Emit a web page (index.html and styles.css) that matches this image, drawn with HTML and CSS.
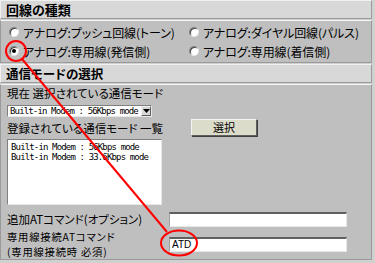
FILE: index.html
```html
<!DOCTYPE html>
<html lang="ja">
<head>
  <meta charset="UTF-8">
  <title>回線設定</title>
  <link rel="stylesheet" href="styles.css">
</head>
<body>
  <div class="panel">
    <div class="sec-head">回線の種類</div>
    <div class="sec-body radios">
      <label class="opt"><span class="radio"></span>アナログ:プッシュ回線(トーン)</label>
      <label class="opt"><span class="radio"></span>アナログ:ダイヤル回線(パルス)</label>
      <label class="opt"><span class="radio on"></span>アナログ:専用線(発信側)</label>
      <label class="opt"><span class="radio"></span>アナログ:専用線(着信側)</label>
    </div>

    <div class="sec-head second">通信モードの選択</div>
    <div class="sec-body modes">
      <div class="label">現在 選択されている通信モード</div>
      <div class="combo">
        <span class="combo-text">Built-in Modem : 56Kbps mode</span>
        <span class="combo-btn"><svg width="7" height="4" viewBox="0 0 7 4"><path d="M0 0h7L3.5 4z" fill="#000"/></svg></span>
      </div>
      <div class="list-row">
        <div class="label">登録されている通信モード 一覧</div>
        <button class="btn">選択</button>
      </div>
      <div class="listbox">
        <div>Built-in Modem : 56Kbps mode</div>
        <div>Built-in Modem : 33.6Kbps mode</div>
      </div>
      <div class="field first">
        <div class="label">追加ATコマンド(オプション)</div>
        <input class="text" type="text" value="">
      </div>
      <div class="field">
        <div class="label two">
          <div>専用線接続ATコマンド</div>
          <div>(専用線接続時 必須)</div>
        </div>
        <input class="text" type="text" value="ATD">
      </div>
    </div>
  </div>

  <!-- red annotation drawn over the dialog -->
  <svg class="marks" width="375" height="263" viewBox="0 0 375 263">
    <circle cx="16" cy="51" r="10" fill="none" stroke="#f00" stroke-width="2"/>
    <line x1="22" y1="59" x2="167" y2="232" stroke="#f00" stroke-width="2"/>
    <ellipse cx="179" cy="243" rx="18" ry="12.5" fill="none" stroke="#f00" stroke-width="2"/>
  </svg>
</body>
</html>
```

FILE: styles.css
```css
* {
  box-sizing: border-box;
}

body {
  margin: 0;
  background-color: #d0d0d0;
  font-family: "Noto Sans CJK JP", sans-serif;
  font-size: 11.5px;
  font-feature-settings: "palt";
  color: #000;
  position: relative;
  width: 375px;
  height: 263px;
  overflow: hidden;
}

.panel {
  width: 372px;
}

.sec-head {
  height: 19px;
  line-height: 17px;
  padding-left: 5px;
  background-color: #d8d8d8;
  border: 1px solid #9a9a9a;
  border-top-color: #f0f0f0;
  border-left-color: #f0f0f0;
  font-size: 13px;
  font-weight: bold;
}

.sec-head.second {
  margin-top: 1px;
  font-size: 12.5px;
}

.sec-body {
  background-color: #bfbfbf;
  border: 1px solid #9a9a9a;
  border-top-color: #f4f4f4;
  margin-top: 1px;
}

.radios {
  display: grid;
  grid-template-columns: 180px 1fr;
  row-gap: 3px;
  padding: 0 0 0 8px;
  height: 43px;
  align-content: center;
}

.opt {
  display: flex;
  align-items: center;
  gap: 4px;
  height: 16px;
  white-space: nowrap;
  font-size: 12px;
  letter-spacing: -0.1px;
}

.radio {
  width: 10px;
  height: 10px;
  border-radius: 50%;
  background: #fff;
  border: 1px solid #808080;
  border-right-color: #e8e8e8;
  border-bottom-color: #e8e8e8;
  box-shadow: inset 1px 1px 0 #404040;
  position: relative;
  flex: none;
}

.radio.on::after {
  content: "";
  position: absolute;
  left: 2px;
  top: 2px;
  width: 4px;
  height: 4px;
  border-radius: 50%;
  background: #000;
}

.modes {
  padding: 2px 0 0 6px;
  height: 176px;
}

.label {
  line-height: 13px;
  white-space: nowrap;
}

.combo {
  display: flex;
  align-items: center;
  width: 145px;
  height: 12px;
  margin-top: 5px;
  background: #fff;
  border: 1px solid #808080;
  border-right-color: #e8e8e8;
  border-bottom-color: #e8e8e8;
  padding-left: 2px;
  overflow: hidden;
}

.combo-text,
.listbox {
  font-family: "DejaVu Sans Mono", monospace;
  font-size: 9px;
  letter-spacing: -0.85px;
  white-space: nowrap;
}

.combo-text {
  flex: 1;
  line-height: 10px;
  overflow: hidden;
}

.combo-btn {
  flex: none;
  width: 10px;
  height: 10px;
  background: #d8d8d8;
  border: 1px solid #f0f0f0;
  border-right-color: #606060;
  border-bottom-color: #606060;
  display: flex;
  align-items: center;
  justify-content: center;
}

.list-row {
  display: flex;
  align-items: flex-start;
  margin-top: 2px;
  height: 17px;
}

.list-row .label {
  margin-top: 3px;
}

.btn {
  margin-left: 28px;
  width: 66px;
  height: 17px;
  padding: 0;
  font-family: "Noto Sans CJK JP", sans-serif;
  font-size: 11px;
  line-height: 13px;
  background-color: #dcdccb;
  border: 1px solid #f4f4f4;
  border-right-color: #606060;
  border-bottom-color: #606060;
  box-shadow: 1px 1px 0 #404040;
}

.listbox {
  width: 155px;
  height: 66px;
  margin-top: 3px;
  background: #fff;
  border: 1px solid #808080;
  border-right-color: #e8e8e8;
  border-bottom-color: #e8e8e8;
  padding: 2px 0 0 3px;
  line-height: 10px;
}

.field {
  display: flex;
  align-items: center;
  justify-content: space-between;
  width: 340px;
}

.field.first {
  margin-top: 7px;
  height: 15px;
}

.field + .field {
  margin-top: 2px;
  height: 30px;
}

.label.two {
  line-height: 15px;
  font-size: 10.3px;
  letter-spacing: 0.8px;
}

.text {
  width: 178px;
  height: 15px;
  padding: 0 2px;
  margin: 0;
  font-family: "Liberation Sans", sans-serif;
  font-size: 10px;
  letter-spacing: 0;
  background: #fff;
  border: 1px solid #e8e8e8;
  border-top: 2px solid #606060;
  border-left: 1px solid #a0a0a0;
  outline: none;
}

.marks {
  position: absolute;
  left: 0;
  top: 0;
  pointer-events: none;
}
```
